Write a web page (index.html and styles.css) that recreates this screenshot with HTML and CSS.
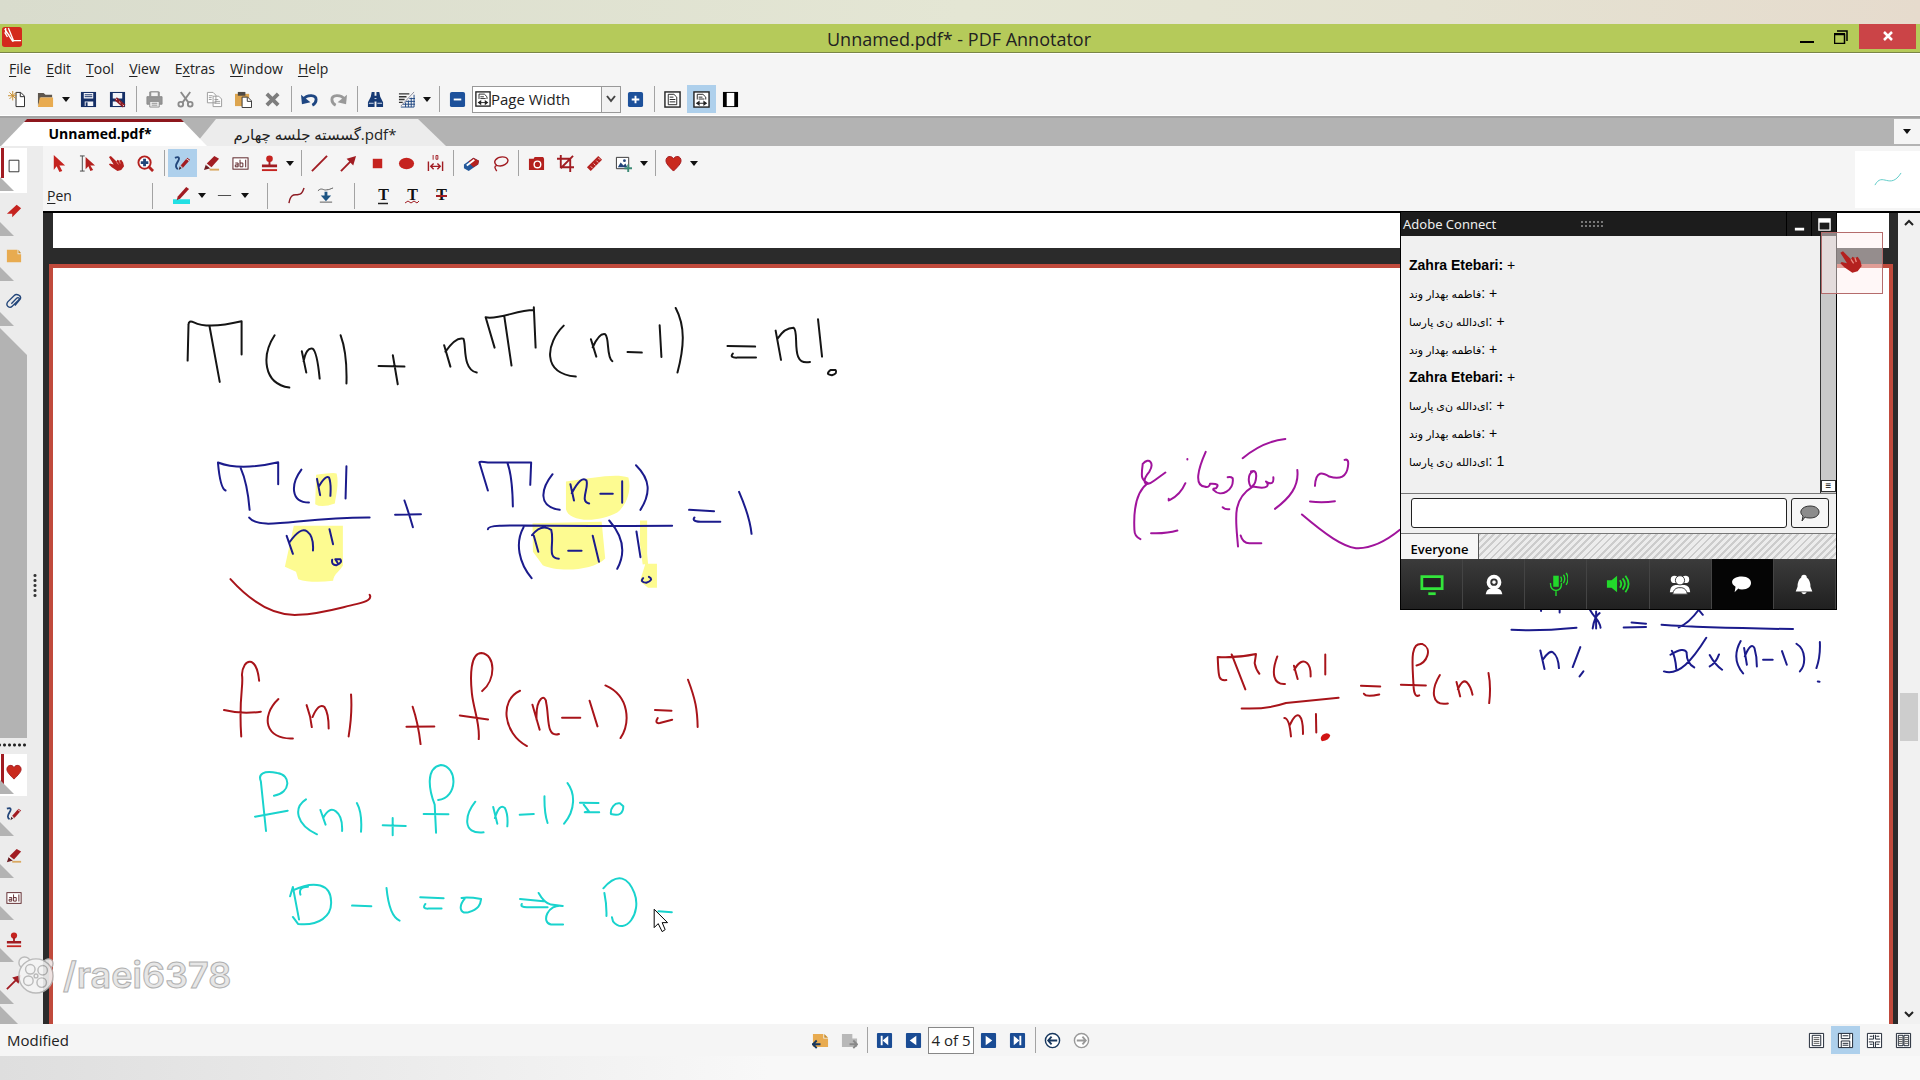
FILE: index.html
```html
<!DOCTYPE html>
<html lang="en">
<head>
<meta charset="utf-8">
<title>Unnamed.pdf* - PDF Annotator</title>
<link rel="stylesheet" href="styles.css">
</head>
<body>
<svg class="defs" aria-hidden="true">
  <symbol id="pencil" viewBox="0 0 18 18"><path d="M2 16l2-5 4 3z" fill="#40222a"/><path d="M5 10L13 2l3 3-8 8z" fill="#a11c22"/><path d="M12 3l3 3" stroke="#eee"/></symbol>
  <symbol id="pen" viewBox="0 0 18 18"><path d="M1 3c5-2 5 1 3 4s-3 6 0 8" fill="none" stroke="#23467a" stroke-width="2"/><path d="M5 16l1-4 2 2z" fill="#40222a"/><path d="M7 11l7-8 3 2-8 9z" fill="#a11c22"/><path d="M8 12l1 1M13 4l3 2" stroke="#eee"/></symbol>
  <symbol id="marker" viewBox="0 0 18 18"><path d="M7 15.500h10" stroke="#d9a860" stroke-width="2"/><path d="M1 16l2-6 5 4z" fill="#6c1b20"/><path d="M4 9l8-8 5 3-8 9z" fill="#a11c22"/><path d="M3 10l5 4" stroke="#eee"/></symbol>
  <symbol id="textbox" viewBox="0 0 18 18"><rect x="1" y="3" width="16" height="12" fill="#fff" stroke="#561c20"/><path d="M3.500 8.500h3v4h-3v-2h3M8.500 5v7.500h3v-4h-3M14.500 5v8" fill="none" stroke="#561c20"/></symbol>
  <symbol id="stamp" viewBox="0 0 18 18"><circle cx="9" cy="4" r="3.500" fill="#c5231f"/><path d="M8 6h2v4h7v3H1v-3h7z" fill="#a11c22"/><path d="M1 16h16" stroke="#c5231f" stroke-width="2"/></symbol>
  <symbol id="arrow" viewBox="0 0 18 18"><path d="M1 17L12 6" stroke="#a11c22" stroke-width="2"/><path d="M17 1l-3 10-7-7z" fill="#a11c22"/></symbol>
  <symbol id="heart" viewBox="0 0 18 18"><path d="M9 17C4 12 1 9 1 6c0-5 6-6 8-2 2-4 8-3 8 2 0 3-3 6-8 11z" fill="#c92a1e" stroke="#a11c22"/></symbol>
  <symbol id="hand" viewBox="0 0 18 18"><path d="M1 2l2-1 6 6 1-2 2 1 2-1 2 3 1 4-3 4-4 1-6-4-3-3 1-1 4 1z" fill="#b4211f"/><path d="M9 7l2 3M12 6l1 3" stroke="#e98a80"/></symbol>
  <symbol id="fold" viewBox="0 0 18 18"><rect x="1" y="1" width="16" height="16" fill="#fff" stroke="#222" stroke-width="1.500"/><path d="M4.500 3.500h6l3 3v8h-9z" fill="none" stroke="#222"/><path d="M6 6.500h4M6 9h6M6 11.500h6" stroke="#222"/></symbol>
  <symbol id="foldwide" viewBox="0 0 18 18"><rect x="1" y="1" width="16" height="16" fill="#fff" stroke="#222" stroke-width="1.500"/><path d="M4.500 9V3.500h6l3 3V9M6 6.500h4M6 8.500h6M4 13h10" fill="none" stroke="#222"/><path d="M7 10v6l-4-3zM11 10v6l4-3z" fill="#222"/></symbol>
  <symbol id="caret" viewBox="0 0 8 5"><path d="M0 0h8L4 5z" fill="#111"/></symbol>
</svg>
<div class="desktop-top"></div>
<header class="titlebar">
  <svg class="logo" viewBox="0 0 22 22"><rect width="22" height="22" rx="3" fill="#d32a1c"/><path d="M3 2l9 14M7 1l6 15M3 6l3 5M4 1v4l4 4M13 15h8" stroke="#fff" stroke-width="1.500" fill="none"/></svg>
  <h1>Unnamed.pdf* - PDF Annotator</h1>
  <div class="winbtns">
    <button class="min" aria-label="Minimize"><svg viewBox="0 0 14 14"><path d="M0 12h14" stroke="#000" stroke-width="2"/></svg></button>
    <button class="max" aria-label="Restore"><svg viewBox="0 0 14 14"><path d="M3 1h10v10M.500 4.500h10v9H.500z" fill="none" stroke="#000" stroke-width="1.500"/><path d="M0 4h11" stroke="#000" stroke-width="2"/></svg></button>
    <button class="close" aria-label="Close"><svg viewBox="0 0 14 14"><path d="M3 2l8 8M11 2l-8 8" stroke="#fff" stroke-width="2.500"/></svg></button>
  </div>
</header>
<nav class="menu">
  <a href="#"><u>F</u>ile</a><a href="#"><u>E</u>dit</a><a href="#"><u>T</u>ool</a><a href="#"><u>V</u>iew</a><a href="#">E<u>x</u>tras</a><a href="#"><u>W</u>indow</a><a href="#"><u>H</u>elp</a>
</nav>
<div class="toolbar main-tools">
  <button aria-label="New"><svg viewBox="0 0 18 18"><path d="M8.500 1.500h5l4 4v11h-9zM13 2v4h4" fill="#fff" stroke="#222"/><path d="M5 0v10M0 5h9M1.500 1.500l7 7M8.500 1.500l-7 7" stroke="#c88d2c"/></svg></button>
  <button aria-label="Open"><svg viewBox="0 0 18 18"><path d="M1 16V2h6l2 2h7v3H4z" fill="#5d564e"/><path d="M3 7h14v10H1z" fill="#e8ab50"/></svg></button>
  <button class="drop" aria-label="Recent files"><svg><use href="#caret"/></svg></button>
  <button aria-label="Save"><svg viewBox="0 0 18 18"><path d="M1 1h16v16H1z" fill="#152f66"/><path d="M4 2h10v6H4zM5 11h9v5H5z" fill="#f3f5fa"/><path d="M5 4h8M5 6h8" stroke="#152f66"/><path d="M7 12v4" stroke="#152f66" stroke-width="2"/></svg></button>
  <button aria-label="Save as"><svg viewBox="0 0 18 18"><path d="M1 1h16v16H1z" fill="#152f66"/><path d="M4 2h10v6H4zM4 11h9v5H4z" fill="#f3f5fa"/><path d="M7 8l9 8" stroke="#8d1b23" stroke-width="4"/><path d="M7 8l9 8" stroke="#f7dede" stroke-width="1" stroke-dasharray="2 3"/></svg></button>
  <i class="sep"></i>
  <button aria-label="Print"><svg viewBox="0 0 18 18"><path d="M4 6V1h10v5M1 6h16v8H1z" fill="#969696" stroke="#8b8b8b"/><path d="M5 1h8v5H5zM4 11h10v6H4z" fill="#f3f3f3" stroke="#8b8b8b"/><path d="M6 13h6M6 15h6" stroke="#8b8b8b"/></svg></button>
  <i class="gap"></i>
  <button aria-label="Cut"><svg viewBox="0 0 18 18"><path d="M4 1l8 11M14 1L6 12" stroke="#8b8b8b" stroke-width="2"/><circle cx="4" cy="14" r="2.500" fill="none" stroke="#8b8b8b" stroke-width="2"/><circle cx="14" cy="14" r="2.500" fill="none" stroke="#8b8b8b" stroke-width="2"/></svg></button>
  <button aria-label="Copy"><svg viewBox="0 0 18 18"><path d="M1.500 1.500h6l3 3v8h-9zM7.500 5.500h6l3 3v8h-9z" fill="#fff" stroke="#9a9a9a"/><path d="M3 5h4M3 7h3M3 9h3M9 9h4M9 11h6M9 13h6" stroke="#9a9a9a"/></svg></button>
  <button aria-label="Paste"><svg viewBox="0 0 18 18"><path d="M0 3h15v13H0z" fill="#dda54f"/><path d="M3 1h8v4H3z" fill="#4f4a44"/><path d="M7.500 6.500h6l4 4v7h-10z" fill="#fff" stroke="#333"/><path d="M13 7v4h4" fill="none" stroke="#333"/></svg></button>
  <button aria-label="Delete"><svg viewBox="0 0 18 18"><path d="M3 3l12 12M15 3L3 15" stroke="#7d7d7d" stroke-width="4"/></svg></button>
  <i class="sep"></i>
  <button aria-label="Undo"><svg viewBox="0 0 18 18"><path d="M2 9c5-6 14-5 14 0 0 3-2 5-4 6" fill="none" stroke="#1e4682" stroke-width="3"/><path d="M0 4l1 10 9-2z" fill="#1e4682"/></svg></button>
  <button aria-label="Redo"><svg viewBox="0 0 18 18"><path d="M16 9C11 3 2 4 2 9c0 3 2 5 4 6" fill="none" stroke="#999" stroke-width="3"/><path d="M18 4l-1 10-9-2z" fill="#999"/></svg></button>
  <i class="sep"></i>
  <button aria-label="Find"><svg viewBox="0 0 18 18"><path d="M5 1h3v4h2V1h3l1 5 3 6v5h-7v-6H8v6H1v-5l3-6z" fill="#163a75"/><path d="M2 13h5M11 13h5M8 8h2" stroke="#dbe5f5"/></svg></button>
  <i class="gap"></i>
  <button aria-label="Grid"><svg viewBox="0 0 18 18"><path d="M1 3h11M1 6h8M1 9h6M1 12h4" stroke="#333" stroke-width="1.500"/><path d="M17 4v13H3M14 7v10M11 10v7M8 12v5M5 14h13M8 11h10M12 8h6" fill="none" stroke="#1e4682"/><path d="M17 1L3 16" stroke="#889"/></svg></button>
  <button class="drop" aria-label="Grid options"><svg><use href="#caret"/></svg></button>
  <i class="sep"></i>
  <button aria-label="Zoom out"><svg viewBox="0 0 18 18"><rect x="1" y="1" width="16" height="16" rx="2" fill="#1d519b"/><path d="M5 9h8" stroke="#fff" stroke-width="2"/></svg></button>
  <div class="combo"><svg><use href="#foldwide"/></svg><select aria-label="Zoom"><option>Page Width</option></select><span class="chev"><svg viewBox="0 0 10 8"><path d="M1 1l4 5 4-5" fill="none" stroke="#444" stroke-width="2"/></svg></span></div>
  <button aria-label="Zoom in"><svg viewBox="0 0 18 18"><rect x="1" y="1" width="16" height="16" rx="2" fill="#1d519b"/><path d="M5 9h8M9 5v8" stroke="#fff" stroke-width="2"/></svg></button>
  <i class="sep"></i>
  <button aria-label="Full page"><svg><use href="#fold"/></svg></button>
  <button class="on" aria-label="Page width"><svg><use href="#foldwide"/></svg></button>
  <button aria-label="Full screen"><svg viewBox="0 0 18 18"><path d="M1 1h16v16H1z"/><path d="M5 2h8v14H5z" fill="#fff"/></svg></button>
</div>
<div class="tabs">
  <div class="tab second"><button><bdi dir="ltr">گسسته جلسه چهارم.pdf*</bdi></button></div>
  <div class="tab first"><button>Unnamed.pdf*</button></div>
  <button class="tablist" aria-label="All documents"><svg><use href="#caret"/></svg></button>
</div>
<main class="work">
  <aside class="side">
    <div class="sidetabs">
      <button class="cur" aria-label="Pages"><svg viewBox="0 0 18 18"><path d="M3.500 2.500h11v13h-11z" fill="#fff" stroke="#222"/></svg></button>
      <button aria-label="Bookmarks"><svg viewBox="0 0 18 18"><path d="M1 12L12 2l5 4-10 10v-4z" fill="#c5231f"/></svg></button>
      <button aria-label="Notes"><svg viewBox="0 0 18 18"><path d="M1 2h12v5h4v9H1z" fill="#e8ab50"/><path d="M14 2l3 4h-3z" fill="#c88d2c"/></svg></button>
      <button aria-label="Attachments"><svg viewBox="0 0 18 18"><path d="M6 12l6-6c2-2 4 0 2 2l-7 7c-3 3-8-1-5-5l7-7c3-3 9 0 7 4l-6 7" fill="none" stroke="#23467a" stroke-width="1.500"/></svg></button>
      <div class="fill"></div>
    </div>
    <div class="dots"></div>
    <div class="sidetabs lower">
      <button class="cur" aria-label="Favorites"><svg><use href="#heart"/></svg></button>
      <button aria-label="Pen"><svg><use href="#pen"/></svg></button>
      <button aria-label="Marker"><svg><use href="#marker"/></svg></button>
      <button aria-label="Text"><svg><use href="#textbox"/></svg></button>
      <button aria-label="Stamp"><svg><use href="#stamp"/></svg></button>
      <button aria-label="Arrow"><svg><use href="#arrow"/></svg></button>
      <div class="fill"></div>
    </div>
    <div class="grip"></div>
  </aside>
  <section class="content">
    <div class="bars">
      <div class="rows">
        <div class="toolbar">
          <button aria-label="Select"><svg viewBox="0 0 18 18"><path d="M4 0l12 11h-6l3 6-3 1-3-6-3 4z" fill="#c5231f"/></svg></button>
          <button aria-label="Select text"><svg viewBox="0 0 18 18"><path d="M1 1h5M3.500 1v16M1 17h5" stroke="#444" fill="none"/><path d="M7 2l10 9h-5l3 5-3 1-2-5-3 3z" fill="#b4211f"/></svg></button>
          <button aria-label="Pan"><svg><use href="#hand"/></svg></button>
          <button aria-label="Zoom"><svg viewBox="0 0 18 18"><circle cx="8" cy="8" r="6.500" fill="#fff" stroke="#b4211f" stroke-width="2"/><path d="M12 12l5 5" stroke="#b4211f" stroke-width="3"/><path d="M8 4v8M4 8h8" stroke="#23467a" stroke-width="3"/></svg></button>
          <i class="sep"></i>
          <button class="on" aria-label="Pen"><svg><use href="#pen"/></svg></button>
          <button aria-label="Marker"><svg><use href="#marker"/></svg></button>
          <button aria-label="Text"><svg><use href="#textbox"/></svg></button>
          <button aria-label="Stamp"><svg><use href="#stamp"/></svg></button>
          <button class="drop" aria-label="Stamps"><svg><use href="#caret"/></svg></button>
          <i class="sep slim"></i>
          <button aria-label="Line"><svg viewBox="0 0 18 18"><path d="M1 17L17 1" stroke="#a11c22" stroke-width="2"/></svg></button>
          <button aria-label="Arrow"><svg><use href="#arrow"/></svg></button>
          <button aria-label="Rectangle"><svg viewBox="0 0 18 18"><path d="M4 4h10v10H4z" fill="#c5231f"/></svg></button>
          <button aria-label="Ellipse"><svg viewBox="0 0 18 18"><ellipse cx="9" cy="9" rx="8" ry="6" fill="#c5231f"/></svg></button>
          <button aria-label="Dimension"><svg viewBox="0 0 18 18"><path d="M6.500 0v5M9.500 .500h2v4h-2z" fill="none" stroke="#a11c22"/><path d="M1.500 7v10M16.500 7v10M4 12h10M7 9l-3 3 3 3M11 9l3 3-3 3" fill="none" stroke="#a11c22" stroke-width="1.500"/></svg></button>
          <i class="sep slim"></i>
          <button aria-label="Eraser"><svg viewBox="0 0 18 18"><path d="M1 10l10-7 6 3-1 4-10 7-5-3z" fill="#23589b"/><path d="M11 3l6 3-1 4-5 3-4-4-1-2z" fill="#b4211f"/><path d="M4 11l8-6" stroke="#fff" stroke-width="2"/></svg></button>
          <button aria-label="Lasso"><svg viewBox="0 0 18 18"><path d="M5 11c-5-4 0-9 6-9s8 5 3 8c-3 2-6 2-9 1-3 1-2 3 0 6" fill="none" stroke="#a11c22" stroke-width="1.500"/></svg></button>
          <i class="sep slim"></i>
          <button aria-label="Snapshot"><svg viewBox="0 0 18 18"><path d="M1 4h5l1-2h9l1 2v12H1z" fill="#b4211f"/><circle cx="10" cy="10" r="3.500" fill="none" stroke="#fff" stroke-width="1.500"/></svg></button>
          <button aria-label="Crop"><svg viewBox="0 0 18 18"><path d="M4 0v13h14M0 4h14v14M17 1L4 14" fill="none" stroke="#a11c22" stroke-width="2"/></svg></button>
          <button aria-label="Ruler"><svg viewBox="0 0 18 18"><path d="M1 13L13 1l4 4L5 17z" fill="#b4211f"/><path d="M5 12l2 2M8 9l2 2M11 6l2 2M13 3l2 2" stroke="#f5d0cc"/></svg></button>
          <button aria-label="Insert image"><svg viewBox="0 0 18 18"><path d="M1.500 2.500h13v12h-13z" fill="#fff" stroke="#333"/><circle cx="10" cy="6" r="1.500" fill="#23467a"/><path d="M3 13l3-5 3 3 2-2 2 4z" fill="#23467a"/><path d="M14 10v8M10 14h8" stroke="#3d8b76" stroke-width="2"/></svg></button>
          <button class="drop" aria-label="Image options"><svg><use href="#caret"/></svg></button>
          <i class="sep slim"></i>
          <button aria-label="Favorites"><svg><use href="#heart"/></svg></button>
          <button class="drop" aria-label="Favorite list"><svg><use href="#caret"/></svg></button>
        </div>
        <div class="toolbar options">
          <span class="toolname"><u>P</u>en</span>
          <i class="sep"></i>
          <button class="first-opt" aria-label="Color"><svg viewBox="0 0 18 18"><path d="M0 13h18v5H0z" fill="#22e0e4"/><path d="M5 10L14 0l3 2-9 10-4 2z" fill="#a11c22"/></svg></button>
          <button class="drop" aria-label="Colors"><svg><use href="#caret"/></svg></button>
          <button aria-label="Width"><svg viewBox="0 0 18 18"><path d="M2 9h14" stroke="#444"/></svg></button>
          <button class="drop" aria-label="Widths"><svg><use href="#caret"/></svg></button>
          <i class="sep wide"></i>
          <button aria-label="Smooth"><svg viewBox="0 0 18 18"><path d="M1 17C3 6 7 9 11 8c4 0 5-4 6-7" fill="none" stroke="#8d1b23" stroke-width="1.500"/></svg></button>
          <button aria-label="Pressure"><svg viewBox="0 0 18 18"><path d="M1 4c4-4 6 0 9-1 3 0 4-1 7-2M3 16h13" fill="none" stroke="#555"/><path d="M8 5h3v4h4l-5.500 6L4 9h4z" fill="#1e5584"/></svg></button>
          <i class="sep wide"></i>
          <button aria-label="Underline"><b>T</b><svg class="mark" viewBox="0 0 18 18"><path d="M4 16.500h10" stroke="#222" stroke-width="1.500"/></svg></button>
          <button aria-label="Squiggly"><b>T</b><svg class="mark" viewBox="0 0 18 18"><path d="M2 16l3-2 3 2 3-2 3 2 2-2" fill="none" stroke="#a11c22"/></svg></button>
          <button aria-label="Strikeout"><b>T</b><svg class="mark" viewBox="0 0 18 18"><path d="M4 9h11" stroke="#a11c22" stroke-width="2"/></svg></button>
        </div>
      </div>
      <div class="preview"><svg viewBox="0 0 30 16"><path d="M1 14C9-1 17 20 29 1" fill="none" stroke="#58c9c5"/></svg></div>
    </div>
    <div class="viewer">
      <div class="pages">
        <div class="page prev"></div>
        <div class="page cur">
          <svg class="ink" viewBox="53 268 1837 756" role="img" aria-label="Handwritten notes">
            <g transform="translate(160 280) scale(.4464 .3333)">
              <g fill="#fdfb91" class="hl"><path d="M350 585q40-8 46-4c6 30-2 70-4 90q-30 14-44 2z"/><path d="M910 605c60-10 110-25 140-12 8 40-5 85-25 105-50 35-110 25-115-10z"/><path d="M300 738h110v120c-10 20-20 25-22 45q-50 8-78-5l-5-22-25-15z"/><path d="M835 730l155-4 8 110c-30 40-110 40-140 20l-22-40zM1076 722h16v100l2 30-12 2-6-60zM1088 852h26v72h-20l-18-20z"/></g>
              <g class="black"><path d="M62 242L64 134Q64 120 76 127Q108 148 183 124V224M111 138L134 306M257 166C228 225 230 310 290 323M318 214L328 278M322 244Q328 202 342 206Q352 214 358 296M405 166Q420 220 418 311M522 226L533 313M490 258L548 260M637 196L651 260M640 215Q663 170 680 176C687 190 677 270 710 278M730 112L750 203M730 112C760 120 800 90 838 90V82L842 203M772 111L788 257M905 137C865 190 855 280 932 290M966 178L978 230M970 202Q985 158 998 163C1008 175 1000 230 1014 244M1048 216L1080 218M1120 136L1124 231M1156 84C1178 140 1175 200 1160 278M1272 198L1334 200M1284 221Q1276 234 1294 233L1336 233M1380 152L1392 240M1385 175Q1400 143 1420 143C1435 155 1410 260 1457 246M1475 118L1484 230"/><path d="M1503 270Q1490 284 1506 286Q1520 280 1514 270Z"/></g>
              <g class="blue"><path d="M147 632Q135 625 130 548Q180 574 265 547V613M181 565Q196 610 201 690M317 569C293 612 292 667 334 668M352 597L359 646M356 620Q371 585 379 593Q384 610 382 648M418 559L416 656M200 713C225 755 310 712 470 713M548 662Q558 700 567 742M527 705L585 703M735 632L716 548Q715 544 735 548H832L830 615M779 550Q790 590 791 680M880 583C855 625 845 680 896 690M920 613L928 662M923 640Q945 585 956 602C962 625 940 665 962 671M987 642H1015M1036 604V669M1067 556C1100 600 1100 640 1077 690M735 748C735 730 790 740 1148 738M284 768L298 822M290 788Q315 740 330 755Q345 770 343 812M380 748L388 793M815 742C795 790 805 850 833 895M838 768L848 816M834 766Q855 730 877 750C885 790 866 835 894 837M915 813H945M970 768L984 846M1007 722C1045 780 1040 830 1025 867M1068 755L1077 832M1186 690L1242 694M1198 713Q1190 726 1218 726H1256M1298 636Q1322 710 1326 762"/><path d="M386 840Q384 857 396 856Q410 848 404 838L393 838L398 849M1083 895Q1075 907 1090 909Q1108 900 1096 891"/></g>
              <path class="red" d="M158 898C200 960 250 1010 310 1005C360 1003 400 985 440 973Q478 962 470 945"/>
            </g>
            <g transform="translate(200 630) scale(.3444 .3333)">
              <path class="red" d="M172 153C165 75 125 85 122 135C128 165 112 200 120 320M70 241Q120 254 177 246M228 208C175 260 190 330 270 326M310 226Q322 260 325 292M327 262Q345 218 362 232Q374 250 374 296M439 194Q443 250 432 320M618 231Q634 280 641 343M600 291L681 290M820 184C860 150 860 75 818 70C785 70 785 140 790 190C795 240 814 280 810 328M755 257L837 269M930 183C870 210 880 310 950 349M966 225L987 300M978 270C975 200 1005 190 1006 220C1015 260 1005 325 1043 313M1052 264L1105 264M1132 213L1155 290M1178 167C1250 200 1250 280 1222 325M1322 241L1370 243M1330 265Q1320 282 1336 280L1372 270M1418 150C1440 210 1445 240 1446 292"/>
              <path class="cyan" d="M215 498C265 490 265 435 225 430C185 422 168 432 177 455L192 604M160 561L255 543M308 509C270 535 280 585 340 614M350 541L365 585M358 565Q375 530 395 545Q415 560 413 604M456 520Q472 550 468 606M560 565V617M531 587L598 589M692 511C750 505 750 410 700 406C655 415 665 480 682 525L686 609M650 553L722 554M800 516C770 555 760 615 824 608M852 532L864 582M857 565Q870 520 886 535Q896 555 893 590M929 555L970 553M1001 500Q1000 550 1010 580M1068 460C1090 490 1092 540 1058 582M1104 519L1158 520M1115 525L1130 545L1118 548L1160 548M1220 521C1205 518 1192 535 1194 553Q1230 563 1230 530ZM262 800L270 772L288 870M292 795Q285 772 314 771M270 782C335 750 380 765 381 815C384 860 345 890 285 883L270 862M442 828L498 830M542 775Q550 860 580 873M640 803L708 806M655 823Q644 838 664 837L702 837M770 806C750 830 755 853 780 848C810 840 815 825 817 808Q780 802 760 805M930 808L998 815M935 823Q930 833 950 833H1010M984 790Q1000 820 1020 825L1054 829M1054 829C1010 820 990 880 1020 885H1055M1172 776C1215 725 1245 745 1262 790C1285 850 1235 920 1200 875L1197 863M1175 790Q1182 825 1181 859M1332 845L1371 848"/>
            </g>
            <g transform="translate(1100 420) scale(.3333)">
              <path class="violet" d="M130 132C150 110 165 130 150 155C125 185 135 205 165 182L198 158M130 132C125 170 125 180 145 190C110 215 102 270 105 330Q105 350 123 358M155 340Q200 342 234 332M264 117v2M258 190Q243 225 212 240M208 237v5M319 96C295 150 285 195 315 200Q330 205 332 192Q365 190 350 205Q340 205 342 210C365 235 405 210 400 175Q395 170 385 172M370 262Q378 270 390 268M430 115Q490 65 558 57M455 155C480 145 470 190 460 198C450 210 440 165 460 155M460 200C510 210 510 195 500 185Q525 200 522 172M460 200C395 240 410 300 416 380M424 347Q430 370 450 370L486 370M594 150C600 200 570 235 527 267M647 198C650 150 670 158 690 170Q740 185 746 140Q750 115 736 120M632 245Q670 250 707 244M608 284C680 345 730 380 770 385C820 388 865 360 902 330"/>
              <path class="red" d="M381 781C355 785 358 765 355 712Q415 715 470 703L466 730Q470 750 480 762M397 704L438 809M534 710C515 760 522 795 557 793M584 738L595 778M585 750Q605 715 623 730Q635 740 634 770M678 704V764M427 866Q500 870 560 850L718 834M555 895Q570 895 575 950M572 915Q588 880 600 888Q612 900 611 943M650 883L651 938M785 798L843 800M794 822Q800 833 840 824M952 737C985 730 1000 685 970 673C930 665 940 735 943 800Q945 835 960 827M905 795L980 797M1022 766C995 810 995 860 1046 851M1072 787L1083 830M1076 808Q1090 778 1102 787Q1115 800 1120 825M1168 760Q1176 800 1170 850"/><path d="M670 945q15-10 23 2q-2 15-25 18q-8-10 2-20z" fill="#d11414"/>
            </g>
            <g transform="translate(1380 400) scale(.3444 .3333)">
              <path class="blue" d="M470 628v6M524 628v10M384 690Q460 695 573 684M612 630C625 655 640 660 643 684M640 640Q625 650 620 686M630 635V686M733 668L775 672M710 683L775 682M820 675Q940 684 1202 688M940 645L928 630Q900 670 870 683M468 752L480 808M475 780Q495 750 505 758Q520 770 522 805M584 742L562 802M593 815L582 830M850 753Q860 770 863 808M846 765Q885 740 893 758Q892 790 915 803M950 714C910 780 870 830 827 815M960 766Q975 795 996 810M987 764Q978 790 960 800M1050 724C1025 770 1040 800 1057 821M1060 745L1068 795M1062 770Q1080 725 1090 745Q1097 770 1097 800M1115 780H1143M1170 754L1184 795M1212 732C1240 750 1240 795 1222 815M1280 727Q1282 770 1270 805M1274 845l5 1"/>
            </g>
            <path class="pointer" d="M654.500 910v18l4-4 4 8 3-2-3-7h5z" fill="#fff" stroke="#000"/>
          </svg>
        </div>
      </div>
      <div class="scroll">
        <button aria-label="Scroll up"><svg viewBox="0 0 10 8"><path d="M1 6l4-4 4 4" fill="none" stroke="#222" stroke-width="2"/></svg></button>
        <div class="thumb"></div>
        <button aria-label="Scroll down"><svg viewBox="0 0 10 8"><path d="M1 2l4 4 4-4" fill="none" stroke="#222" stroke-width="2"/></svg></button>
      </div>
      <section class="chat">
        <header><h2>Adobe Connect</h2><span class="handle"></span><button aria-label="Minimize"><svg viewBox="0 0 14 14"><path d="M2 12h10" stroke="#fff" stroke-width="3"/></svg></button><button aria-label="Maximize"><svg viewBox="0 0 14 14"><path d="M1 1h12v12H1z" fill="none" stroke="#fff" stroke-width="1.500"/><path d="M1 3h12" stroke="#fff" stroke-width="4"/></svg></button></header>
        <div class="log">
          <ul>
            <li><b>Zahra Etebari:</b> +</li>
            <li><bdi>فاطمه بهدار وند</bdi>: +</li>
            <li><bdi>ای‌دالله ن‌ی پارسا</bdi>: +</li>
            <li><bdi>فاطمه بهدار وند</bdi>: +</li>
            <li><b>Zahra Etebari:</b> +</li>
            <li><bdi>ای‌دالله ن‌ی پارسا</bdi>: +</li>
            <li><bdi>فاطمه بهدار وند</bdi>: +</li>
            <li><bdi>ای‌دالله ن‌ی پارسا</bdi>: 1</li>
          </ul>
          <div class="logbar"><button aria-label="Scroll">≡</button></div>
        </div>
        <form><input type="text" aria-label="Message"><button type="button" aria-label="Send"><svg viewBox="0 0 20 17"><path d="M10 1c12 0 12 12 0 12q-4 0-5-1l-3 4 1-5C-2 7 2 1 10 1z" fill="#8c8c8c" stroke="#333"/></svg></button></form>
        <div class="who"><button>Everyone</button></div>
        <div class="pods">
          <button aria-label="Share"><svg viewBox="0 0 26 26"><path d="M2 5h22v13H2z" fill="#222" stroke="#33e53b" stroke-width="3"/><path d="M9 22h8v3H9z" fill="#33e53b"/></svg></button>
          <button aria-label="Camera"><svg viewBox="0 0 26 26"><circle cx="13" cy="11" r="6" fill="none" stroke="#fff" stroke-width="4"/><circle cx="13" cy="11" r="2.500" fill="#fff" stroke="#222"/><path d="M4 24q1-5 5-6h8q4 1 5 6z" fill="#fff"/></svg></button>
          <button aria-label="Microphone"><svg viewBox="0 0 26 26"><path d="M10 4h6v12h-6z" fill="#22d92b"/><path d="M7 12q0 8 6 8t6-8M13 20v6M18 5q2 3 0 6M21 3q3 4 0 9M24 1q4 6 0 13" fill="none" stroke="#22d92b" stroke-width="1.500"/></svg></button>
          <button aria-label="Speaker"><svg viewBox="0 0 26 26"><path d="M1 9h5l6-5v18l-6-5H1z" fill="#22d92b"/><path d="M15 9q3 4 0 8M18 7q5 6 0 12M21 4q7 9 0 18" fill="none" stroke="#22d92b" stroke-width="2"/></svg></button>
          <button aria-label="Attendees"><svg viewBox="0 0 26 26"><circle cx="7" cy="8" r="4" fill="#fff"/><circle cx="19" cy="8" r="4" fill="#fff"/><path d="M2 22q0-7 6-8h10q6 1 6 8z" fill="#fff"/><circle cx="13" cy="9" r="5" fill="#fff" stroke="#333"/><path d="M5 24q1-6 6-7h4q5 1 6 7z" fill="#fff" stroke="#333"/></svg></button>
          <button class="on" aria-label="Chat"><svg viewBox="0 0 26 26"><path d="M13 5c13 0 13 14 0 14q-3 0-4-1l-4 4 1-6C-1 12 2 5 13 5z" fill="#fff"/></svg></button>
          <button aria-label="Status"><svg viewBox="0 0 26 26"><path d="M13 3q3 0 3 3 4 3 4 10l2 5H4l2-5q0-7 4-10 0-3 3-3zM10 22h6q-3 4-6 0z" fill="#fff"/></svg></button>
        </div>
      </section>
      <div class="touch"><svg><use href="#hand"/></svg></div>
    </div>
  </section>
  <div class="watermark"><svg viewBox="0 0 40 40"><g fill="#f4f4f4" stroke="#b5b5b5" stroke-width="1.500"><circle cx="8" cy="7" r="6"/><circle cx="33" cy="8" r="5"/><circle cx="20" cy="21" r="18"/><circle cx="14" cy="14" r="5"/><circle cx="27" cy="15" r="5"/><circle cx="12" cy="26" r="5"/><circle cx="26" cy="28" r="5"/><circle cx="20" cy="21" r="2"/></g></svg><span>/raei6378</span></div>
</main>
<footer class="status">
  <span class="state">Modified</span>
  <div class="toolbar nav">
    <button aria-label="Previous bookmark"><svg viewBox="0 0 18 18"><path d="M1 2h11v5h5v9H1z" fill="#e8ab50"/><path d="M13 2l4 4h-4z" fill="#c88d2c"/><path d="M0 13h9M5 9l-4 4 4 4" fill="none" stroke="#17375e" stroke-width="2"/></svg></button>
    <button aria-label="Next bookmark"><svg viewBox="0 0 18 18"><path d="M1 2h11v5h5v9H1z" fill="#b8b8b8"/><path d="M9 13h8M13 9l4 4-4 4" fill="none" stroke="#888" stroke-width="2"/></svg></button>
    <i class="sep"></i>
    <button aria-label="First page"><svg viewBox="0 0 18 18"><rect x="1" y="1" width="16" height="16" rx="1" fill="#1a4c94"/><path d="M6 4v10" stroke="#fff" stroke-width="2"/><path d="M13 4v10L7 9z" fill="#fff"/></svg></button>
    <button aria-label="Previous page"><svg viewBox="0 0 18 18"><rect x="1" y="1" width="16" height="16" rx="1" fill="#1a4c94"/><path d="M12 4v10L5 9z" fill="#fff"/></svg></button>
    <input type="text" aria-label="Page" value="4 of 5">
    <button aria-label="Next page"><svg viewBox="0 0 18 18"><rect x="1" y="1" width="16" height="16" rx="1" fill="#1a4c94"/><path d="M6 4v10l7-5z" fill="#fff"/></svg></button>
    <button aria-label="Last page"><svg viewBox="0 0 18 18"><rect x="1" y="1" width="16" height="16" rx="1" fill="#1a4c94"/><path d="M12 4v10" stroke="#fff" stroke-width="2"/><path d="M5 4v10l6-5z" fill="#fff"/></svg></button>
    <i class="sep"></i>
    <button aria-label="Back"><svg viewBox="0 0 18 18"><circle cx="9" cy="9" r="7.500" fill="#fff" stroke="#17375e" stroke-width="1.500"/><path d="M5 9h9M8 5L4.500 9 8 13" fill="none" stroke="#17375e" stroke-width="2"/></svg></button>
    <button aria-label="Forward"><svg viewBox="0 0 18 18"><circle cx="9" cy="9" r="7.500" fill="#fff" stroke="#999" stroke-width="1.500"/><path d="M4 9h9M10 5l3.500 4-3.500 4" fill="none" stroke="#999" stroke-width="2"/></svg></button>
  </div>
  <div class="toolbar views">
    <button aria-label="Single page"><svg viewBox="0 0 18 18"><path d="M1.500 1.500h15v15h-15zM4.500 3.500h9v11h-9z" fill="#fff" stroke="#17202e"/><path d="M6 6h6M6 8h6M6 10h6M6 12h6" stroke="#555"/></svg></button>
    <button class="on" aria-label="Continuous"><svg viewBox="0 0 18 18"><path d="M1.500 1.500h15v15h-15z" fill="#fff" stroke="#17202e"/><path d="M4.500 2v5h9V2M4.500 16V9.500h9V16M6 4h6M6 12h6M6 14h6" fill="none" stroke="#17202e"/></svg></button>
    <button aria-label="Facing continuous"><svg viewBox="0 0 18 18"><path d="M1.500 1.500h15v15h-15z" fill="#fff" stroke="#17202e"/><path d="M3 7.500h5V3M10 3v4.500h5M3 10.500h5V16M10 16v-5.500h5M4 4.500h3M11 4.500h3M4 13h3M11 13h3" fill="none" stroke="#17202e"/></svg></button>
    <button aria-label="Facing"><svg viewBox="0 0 18 18"><path d="M1.500 1.500h15v15h-15zM3.500 3.500h5v11h-5zM9.500 3.500h5v11h-5z" fill="#fff" stroke="#17202e"/><path d="M4 6h4M4 8h4M4 10h4M4 12h4M10 6h4M10 8h4M10 10h4M10 12h4" stroke="#555"/></svg></button>
  </div>
</footer>
<div class="desktop-bottom"></div>
</body>
</html>
```
FILE: styles.css
```css
* { box-sizing: border-box; }
body {
  margin: 0;
  min-height: 100vh;
  display: flex;
  flex-direction: column;
  background: #f5f5f5;
  color: #222;
  font: 14px/20px "Open Sans", "Noto Sans", "DejaVu Sans", sans-serif;
  overflow: hidden;
}
button { border: 0; padding: 0; background: none; font: inherit; color: inherit; display: flex; align-items: center; justify-content: center; }
input, select { font: inherit; color: inherit; border-radius: 0; }
.defs { display: none; }
.desktop-top { height: 24px; background: linear-gradient(90deg, #d9dccd, #e4e6d4 50%, #e4e2d2 75%, #e6dbcd); }
.desktop-bottom { height: 24px; background: linear-gradient(90deg, #dedede, #f8f8f8 40%, #f8f8f8); }

.titlebar { height: 29px; display: flex; align-items: flex-start; background: #b5ca5a; border-bottom: 1px solid #7a8547; }
.logo { width: 20px; height: 20px; margin: 3px 0 0 2px; }
.titlebar h1 { flex: 1; margin: 0; text-align: center; font-size: 18px; line-height: 31px; font-weight: 400; padding-left: 106px; }
.winbtns { display: flex; }
.winbtns button { height: 25px; width: 34px; }
.winbtns .max { margin-right: 1px; }
.winbtns .close { width: 57px; margin-right: 4px; background: #cb4447; }
.winbtns svg { width: 14px; height: 14px; }

.menu { height: 30px; display: flex; align-items: center; gap: 15px; padding: 0 9px; border-top: 1px solid #fff; }
.menu a { color: inherit; text-decoration: none; }
u { text-underline-offset: 2px; }

.toolbar { display: flex; align-items: center; height: 34px; }
.toolbar button { width: 29px; height: 28px; flex: none; position: relative; }
.toolbar button svg { width: 17px; height: 17px; }
.toolbar .drop { width: 14px; padding-right: 2px; }
.toolbar .drop svg, .tablist svg { width: 8px; height: 5px; }
.toolbar .on { background: #aed0ec; }
.sep { flex: none; width: 8px; height: 26px; background: linear-gradient(#a3a3a3, #a3a3a3) center / 1px 100% no-repeat; }
.sep.slim { width: 7px; }
.sep.wide { width: 29px; }
.gap { width: 2px; }
.main-tools { padding: 0 2px; height: 33px; border-bottom: 1px solid #fff; }
.combo { display: flex; align-items: center; width: 149px; height: 27px; border: 1px solid #999; background: #fff; }
.combo > svg { width: 16px; height: 16px; margin: 0 0 0 2px; }
.combo select { flex: 1; min-width: 0; border: 0; padding: 0; background: none; appearance: none; height: 24px; font-size: 15px; }
.chev { width: 19px; height: 25px; border-left: 1px solid #999; background: #f2f2f2; display: flex; align-items: center; justify-content: center; }
.chev svg { width: 10px; height: 8px; }

.tabs { height: 30px; background: #b3b3b3; border-top: 2px solid #a3a3a3; display: flex; align-items: stretch; padding-top: 1px; }
.tab button { width: 100%; height: 100%; }
.tab.first { order: 0; width: 206px; margin-left: 1px; background: linear-gradient(#8d161c 0 3px, #fff 3px); clip-path: polygon(0 100%, 26px 0, 180px 0, 100% 100%); z-index: 1; padding: 0 16px 0 8px; font-weight: 700; color: #000; }
.tab.first button { padding-top: 2px; }
.tab.second { order: 1; width: 252px; margin-left: -13px; background: #ececec; clip-path: polygon(0 100%, 22px 0, 224px 0, 100% 100%); padding-right: 10px; font-size: 15px; }
.tab.second button { padding-top: 2px; }
.tablist { order: 2; width: 26px; margin-left: auto; background: #f5f5f5; margin-bottom: 2px; }

.work { flex: 1; display: flex; min-height: 0; position: relative; }
.side { width: 43px; flex: none; display: flex; flex-direction: column; background: #ececec; padding-right: 16px; position: relative; }
.sidetabs { flex: 1 1 0; display: flex; flex-direction: column; padding-top: 2px; }
.sidetabs.lower { flex: 0 0 272px; }
.sidetabs button { height: 45px; padding: 0 0 10px 1px; position: relative; }
.sidetabs.lower button { height: 42px; padding-bottom: 6px; }
.sidetabs svg { width: 16px; height: 16px; }
.sidetabs button::after { content: ""; position: absolute; left: 0; bottom: 2px; border-bottom: 14px solid #b3b3b3; border-right: 14px solid transparent; }
.sidetabs .cur { background: linear-gradient(#a11c22, #a11c22) 1px 0 / 3px 30px no-repeat #fff; }
.sidetabs .fill { flex: 1; background: #b3b3b3; clip-path: polygon(0 0, 100% 27px, 100% 100%, 0 100%); }
.dots { height: 14px; background: radial-gradient(circle, #222 1px, transparent 2px) 2px 4px / 5px 6px repeat-x; }
.grip { position: absolute; left: 33px; top: 427px; width: 4px; height: 26px; background: radial-gradient(circle, #333 1px, transparent 2px) 0 0 / 4px 5px; }

.content { flex: 1; min-width: 0; display: flex; flex-direction: column; }
.bars { display: flex; justify-content: space-between; background: #f5f5f5; }
.rows { flex: 1; padding: 0 1px; }
.options { height: 31px; }
.toolname { width: 104px; padding-left: 3px; }
.options .first-opt { margin-left: 11px; }
.options b { font: 700 16px/18px "Liberation Serif", serif; color: #111; padding-bottom: 2px; }
.options button .mark { position: absolute; left: 5px; top: 5px; width: 18px; height: 18px; }
.preview { width: 65px; margin: 5px 0 3px; background: #fff; display: flex; align-items: center; justify-content: center; }
.preview svg { width: 28px; height: 15px; }

.viewer { flex: 1; min-height: 0; display: flex; background: #2b2b2b; border-top: 2px solid #000; position: relative; }
.pages { flex: 1; min-width: 0; padding: 0 5px 0 6px; display: flex; flex-direction: column; overflow: hidden; }
.page { background: #fff; }
.prev { height: 35px; flex: none; margin: 0 4px 16px; }
.page.cur { flex: 1; min-height: 0; border: 4px solid #c04a3c; border-bottom: 0; overflow: hidden; }
.ink { width: 100%; display: block; }
.ink path { stroke-width: 2px; vector-effect: non-scaling-stroke; stroke-linecap: round; stroke-linejoin: round; }
.ink .pointer { stroke-width: 1px; }
.black path, .blue path, path.blue, .red, .cyan, .violet { fill: none; }
.black path { stroke: #151515; }
.blue path, path.blue { stroke: #1b1b8c; }
.ink .red { stroke: #a8141a; }
.cyan { stroke: #19d3cd; }
.violet { stroke: #a0149c; }
.scroll { width: 22px; background: #f1f1f1; display: flex; flex-direction: column; justify-content: space-between; align-items: center; }
.scroll button { width: 20px; height: 20px; }
.scroll svg { width: 10px; height: 8px; }
.thumb { width: 18px; height: 48px; background: #cdcdcd; margin: 460px 0 auto; }

.chat { position: absolute; right: 83px; top: -2px; width: 437px; border: 1px solid #000; background: #f0f0f0; font-family: "Liberation Sans", "DejaVu Sans", sans-serif; color: #000; }
.chat header { height: 24px; display: flex; align-items: center; background: #1c1c1c; color: #eee; }
.chat h2 { margin: 0; padding-left: 2px; font: 400 13px/20px "Noto Sans", sans-serif; width: 179px; }
.handle { width: 24px; height: 9px; margin-right: auto; background: radial-gradient(circle, #777 1px, transparent 1px) 0 0 / 4px 4px; }
.chat header button { width: 25px; height: 24px; border-left: 1px solid #000; }
.chat header svg { width: 13px; height: 13px; }
.log { display: flex; height: 258px; border-bottom: 1px solid #777; }
.log ul { flex: 1; list-style: none; margin: 0; padding: 15px 8px; }
.log li { height: 28px; line-height: 28px; }
.log bdi { font-size: 11px; }
.logbar { width: 16px; background: #c8c8c8; border-left: 1px solid #333; display: flex; align-items: flex-end; }
.logbar button { width: 15px; height: 12px; background: #fff; border: 1px solid #333; font-size: 10px; line-height: 10px; margin-bottom: 1px; }
.chat form { display: flex; gap: 4px; height: 39px; padding: 4px 7px 5px 10px; }
.chat form input { flex: 1; min-width: 0; border: 1px solid #222; border-radius: 3px; background: #fff; }
.chat form button { width: 38px; border: 1px solid #222; border-radius: 3px; background: #f6f6f6; }
.chat form svg { width: 20px; height: 17px; }
.who { height: 26px; border-top: 1px solid #777; background: repeating-linear-gradient(135deg, #ccc 0 2px, #ececec 2px 5px); }
.who button { width: 78px; height: 25px; background: #f6f6f6; border-right: 1px solid #555; font: 600 13px/20px "Open Sans", sans-serif; padding-top: 4px; }
.pods { display: grid; grid-template-columns: repeat(7, 1fr); height: 50px; background: linear-gradient(#3b3b3b, #202020); }
.pods button { border-right: 1px solid #444; }
.pods .on { background: #050505; }
.pods svg { width: 24px; height: 24px; }
.touch { position: absolute; right: 37px; top: 19px; width: 62px; height: 62px; border: 1px solid #b56c6c; background: rgba(255, 240, 240, .5); padding: 17px; }
.touch svg { width: 24px; height: 24px; }

.watermark { position: absolute; left: 17px; bottom: 29px; display: flex; align-items: center; gap: 8px; }
.watermark svg { width: 38px; height: 40px; opacity: .9; }
.watermark span { font: 600 36px/40px Inter, sans-serif; color: #e6e6e6; -webkit-text-stroke: 1px #b0b0b0; }

.status { height: 32px; display: grid; grid-template-columns: 1fr auto 1fr; align-items: center; background: #f5f5f5; font-size: 15px; }
.state { padding-left: 7px; }
.nav { margin-right: 18px; height: 32px; }
.nav .sep { width: 6px; }
.nav input { width: 46px; height: 27px; padding: 0; border: 1px solid #888; background: #fff; text-align: center; }
.views { justify-self: end; padding-right: 2px; height: 32px; }
```
